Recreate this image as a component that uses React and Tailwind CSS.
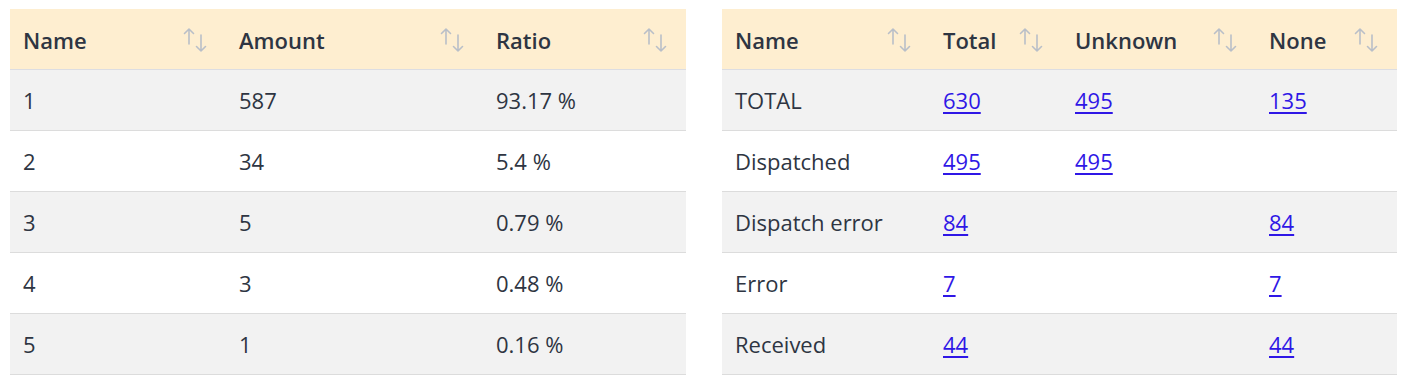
import React from 'react';

const SortIcon = () => (
  <svg width="24" height="26" viewBox="0 0 24 26" fill="none" stroke="#b9bfc8" strokeWidth="1.6" strokeLinecap="round" strokeLinejoin="round" className="shrink-0">
    <path d="M6 17V2M1.5 6.5L6 2l4.5 4.5" />
    <path d="M18 8v16M13.5 19.5L18 24l4.5-4.5" />
  </svg>
);

const Link = ({ children }) => (
  <a href="#" className="text-[#2f17e6] underline underline-offset-[3px]">{children}</a>
);

const leftRows = [
  ['1', '587', '93.17 %'],
  ['2', '34', '5.4 %'],
  ['3', '5', '0.79 %'],
  ['4', '3', '0.48 %'],
  ['5', '1', '0.16 %'],
];

const rightRows = [
  ['TOTAL', '630', '495', '135'],
  ['Dispatched', '495', '495', ''],
  ['Dispatch error', '84', '', '84'],
  ['Error', '7', '', '7'],
  ['Received', '44', '', '44'],
];

function DataTable({ width, cols, rows, pad, links }) {
  return (
    <div style={{ width }} className="flex flex-col">
      <div className="flex h-[61px] pt-[2px] bg-[#feeed0] border-b border-[#dcdde2] font-semibold">
        {cols.map((c) => (
          <div key={c.label} style={{ width: c.w, paddingLeft: pad }} className="flex items-center justify-between pr-[19px] shrink-0">
            <span>{c.label}</span>
            <SortIcon />
          </div>
        ))}
      </div>
      {rows.map((r, i) => (
        <div key={i} className={`flex h-[61px] pt-[1px] border-b border-[#dcdcdc] ${i % 2 === 0 ? 'bg-[#f2f2f2]' : 'bg-white'}`}>
          {r.map((v, j) => (
            <div key={j} style={{ width: cols[j].w, paddingLeft: pad }} className="flex items-center shrink-0">
              {links && j > 0 ? v && <Link>{v}</Link> : v}
            </div>
          ))}
        </div>
      ))}
    </div>
  );
}

export default function App() {
  return (
    <div className="w-[1405px] h-[388px] bg-white pt-[9px] flex gap-[36px] pl-[10px] text-[22px] text-[#2e3542]" style={{ fontFamily: '"Open Sans", "Noto Sans", sans-serif' }}>
      <DataTable
        width={676}
        pad={13}
        cols={[{ label: 'Name', w: 216 }, { label: 'Amount', w: 257 }, { label: 'Ratio', w: 203 }]}
        rows={leftRows}
      />
      <DataTable
        width={675}
        pad={13}
        links
        cols={[{ label: 'Name', w: 208 }, { label: 'Total', w: 132 }, { label: 'Unknown', w: 194 }, { label: 'None', w: 141 }]}
        rows={rightRows}
      />
    </div>
  );
}
